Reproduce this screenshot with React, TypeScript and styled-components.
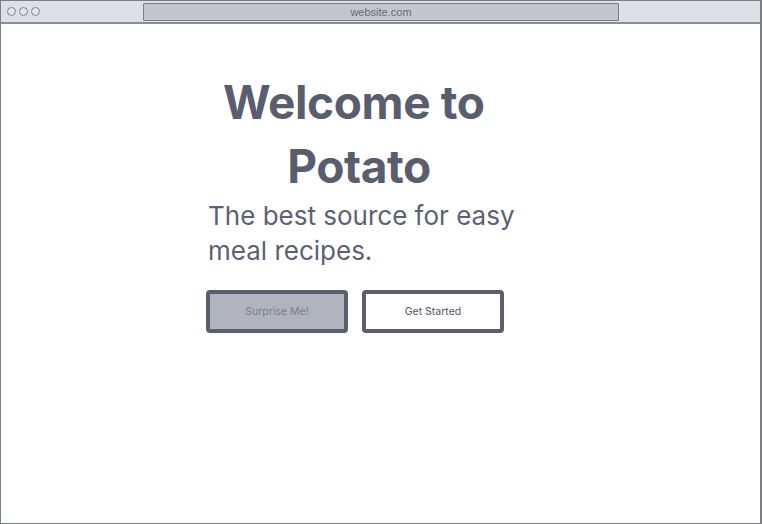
import React from "react";
import styled, { createGlobalStyle } from "styled-components";

const Global = createGlobalStyle`
  html, body { margin: 0; padding: 0; background: #ffffff; }
  body { font-family: Inter, "Noto Sans", sans-serif; }
  * { box-sizing: border-box; }
`;

const Window = styled.div`
  width: 762px;
  height: 524px;
  border: 1px solid #7b7e89;
  border-right-width: 2px;
  display: flex;
  flex-direction: column;
  background: #ffffff;
  overflow: hidden;
`;

const TitleBar = styled.div`
  height: 23px;
  flex: none;
  background: #dfe0e4;
  border-bottom: 2px solid #8b8e98;
  display: flex;
  align-items: center;
  padding: 0 0 0 6px;
`;

const Dots = styled.div`
  display: flex;
  gap: 3px;
  width: 136px;
  flex: none;
`;

const Dot = styled.span`
  width: 9px;
  height: 9px;
  border-radius: 50%;
  border: 1.3px solid #80838e;
  background: #e4e5e8;
`;

const UrlBar = styled.div`
  width: 476px;
  height: 18px;
  background: #c4c6cc;
  border: 1.5px solid #7a7d88;
  border-radius: 1px;
  display: flex;
  align-items: center;
  justify-content: center;
  font-family: "Liberation Sans", Arial, sans-serif;
  font-size: 11px;
  color: #666a75;
`;

const Content = styled.main`
  flex: 1;
  padding: 46px 0 0 205px;
`;

const Hero = styled.section`
  width: 312px;
  display: flex;
  flex-direction: column;
`;

const Heading = styled.h1`
  margin: 0 2px 0 -4px;
  font-size: 46px;
  font-weight: 700;
  line-height: 64px;
  letter-spacing: -0.4px;
  text-align: center;
  white-space: break-spaces;
  color: #585e6f;
`;

const Lead = styled.p`
  margin: 0 0 0 2px;
  font-size: 26px;
  font-weight: 400;
  line-height: 35px;
  color: #5c6274;
`;

const Actions = styled.div`
  display: flex;
  gap: 14px;
  margin-top: 22px;
`;

const Button = styled.button<{ $primary?: boolean }>`
  width: 142px;
  height: 43px;
  border: 4px solid #5a6070;
  border-radius: 4px;
  background: ${(p) => (p.$primary ? "#b1b4bd" : "#ffffff")};
  color: ${(p) => (p.$primary ? "#7a7e8b" : "#4f5567")};
  font-family: Inter, "Noto Sans", sans-serif;
  font-size: 10.5px;
  padding: 0;
  cursor: pointer;
`;

export default function App() {
  return (
    <>
      <Global />
      <Window>
        <TitleBar>
          <Dots>
            <Dot />
            <Dot />
            <Dot />
          </Dots>
          <UrlBar>website.com</UrlBar>
        </TitleBar>
        <Content>
          <Hero>
            <Heading>Welcome to Potato</Heading>
            <Lead>The best source for easy meal recipes.</Lead>
            <Actions>
              <Button $primary>Surprise Me!</Button>
              <Button>Get Started</Button>
            </Actions>
          </Hero>
        </Content>
      </Window>
    </>
  );
}
